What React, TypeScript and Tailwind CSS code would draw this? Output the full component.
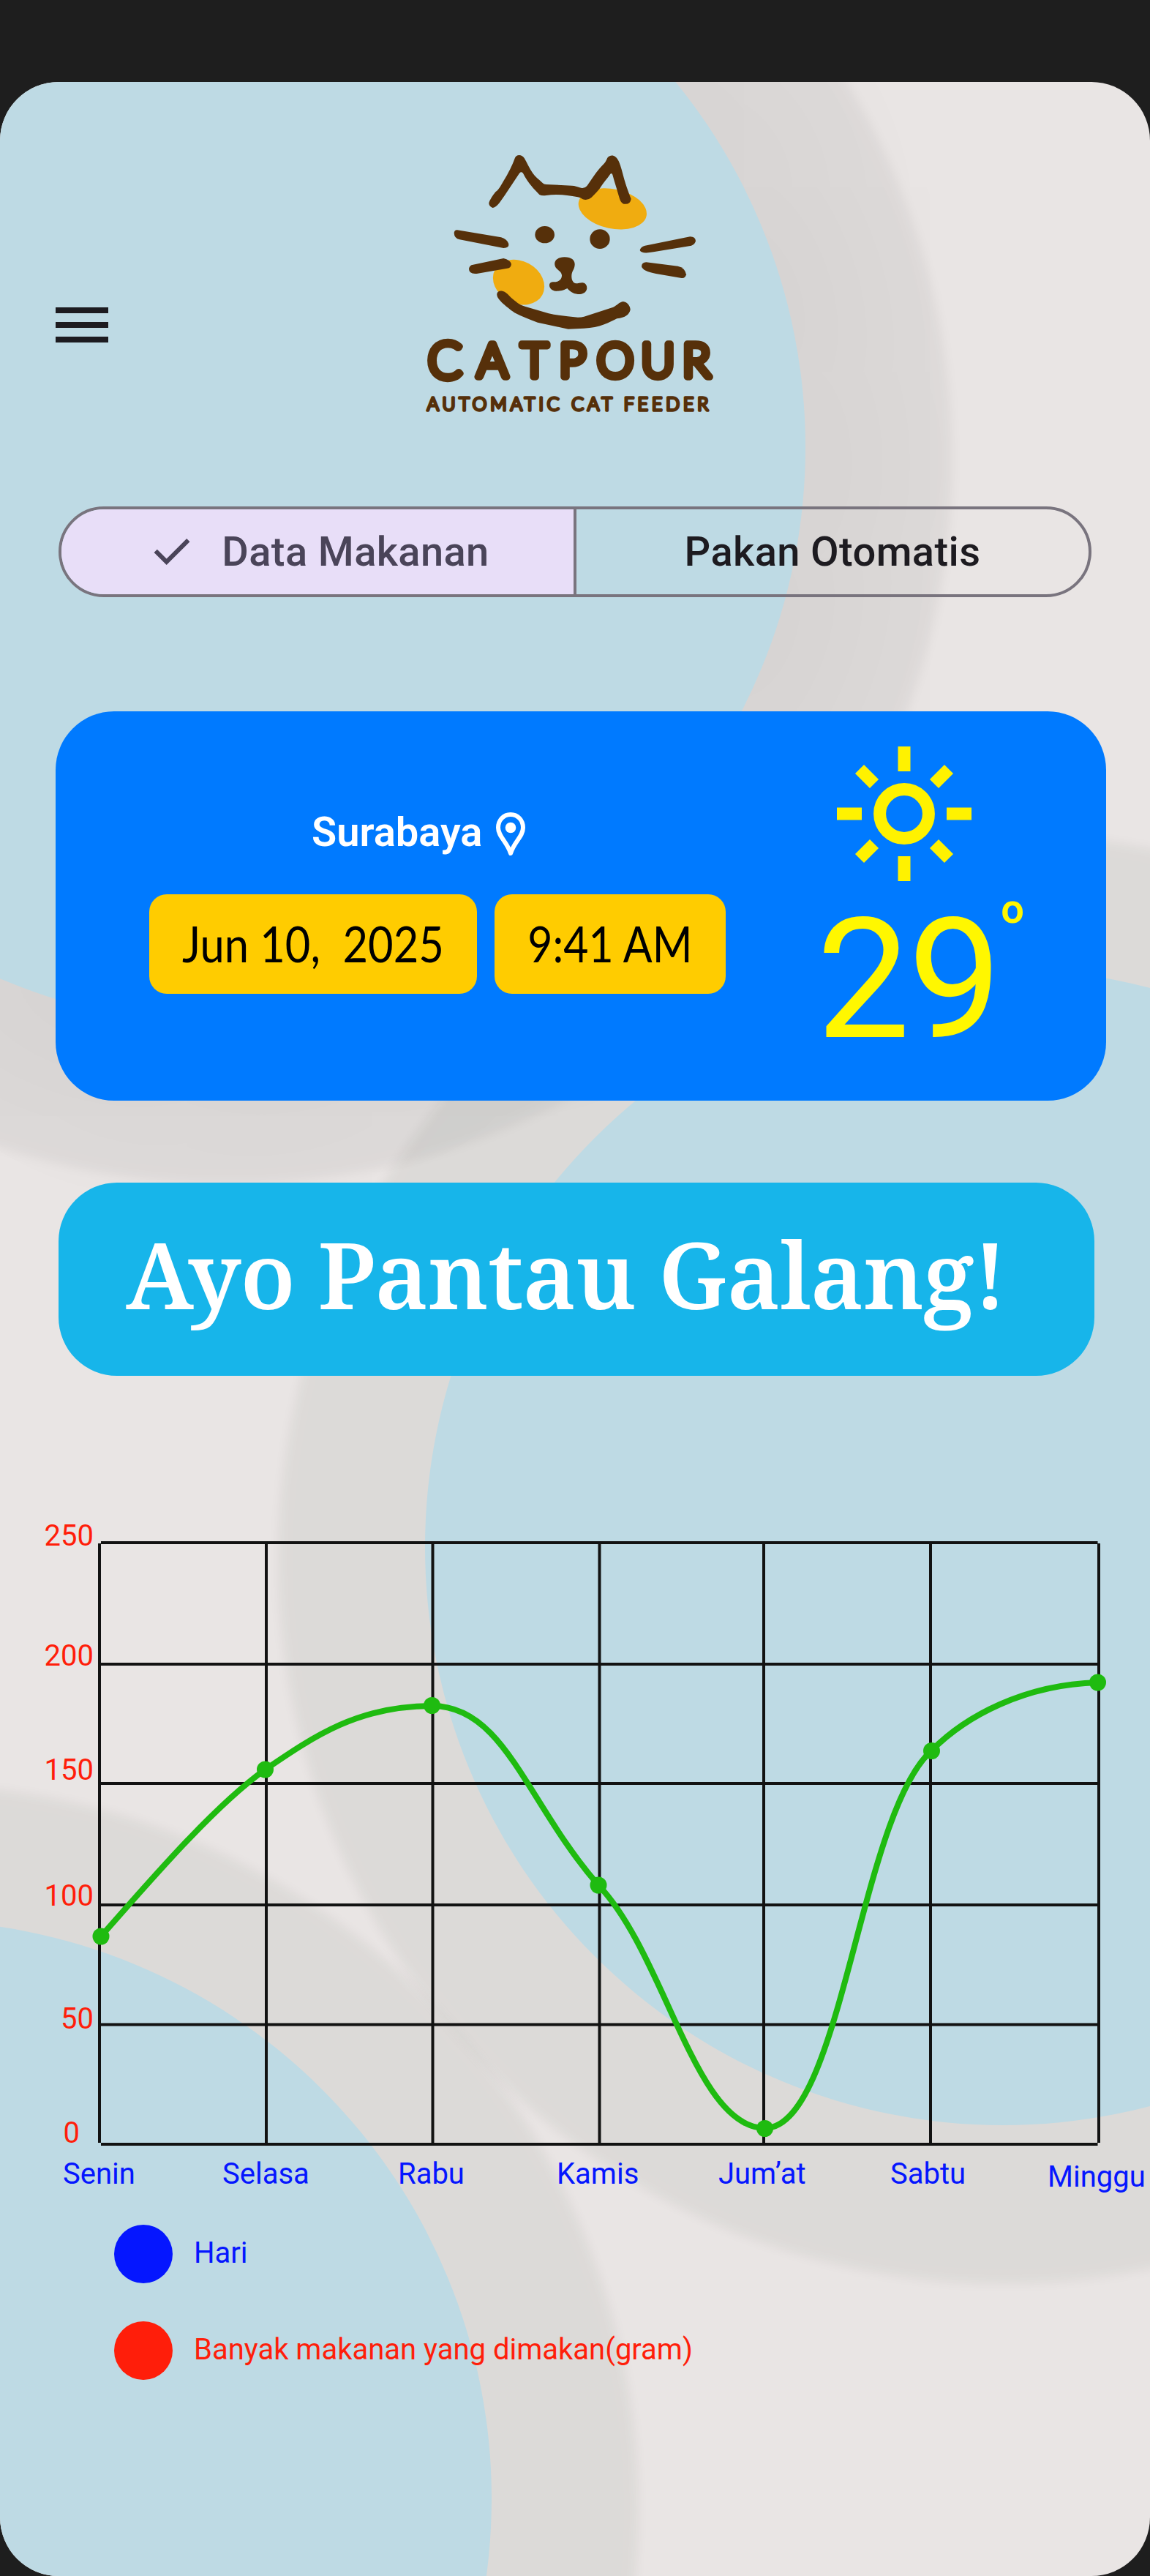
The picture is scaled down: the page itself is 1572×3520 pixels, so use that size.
const BROWN = "#56300a";

function CatLogo() {
  return (
    <svg viewBox="0 0 1320 1170" className="mt-[78px] ml-[412px] h-[390px] w-[440px] shrink-0 overflow-visible">
      <ellipse cx="832" cy="286" rx="142" ry="81" fill="#f0ac10" transform="rotate(12 832 286)" />
      <ellipse cx="447" cy="587" rx="110" ry="87" fill="#f0ac10" transform="rotate(28 447 587)" />
      <g fill={BROWN}>
        <path d="M325 262Q324 275 340 282Q352 282 368 262C390 232 420 185 450 140Q458 132 465 140C480 170 500 196 532 228Q542 234 560 231C600 225 640 229 690 238Q700 240 710 247Q728 254 745 240C760 225 770 215 778 205C790 185 808 165 822 145Q828 136 832 146C840 175 848 200 858 235C862 250 866 262 878 266Q905 270 908 245C900 225 890 200 880 165C872 135 866 110 858 92C845 65 825 62 812 76C808 82 806 92 796 102C775 122 752 155 733 184Q722 203 706 201C690 198 685 192 665 191L560 186Q550 186 545 180C530 165 515 155 505 140C490 118 480 95 470 78C458 60 435 62 430 82C422 105 405 140 385 172C372 195 365 208 352 217C342 230 328 250 325 262Z" />
        <path d="M195 373L375 403Q400 410 406 430Q408 447 385 447L205 412Q183 408 182 385Q184 372 195 373Z" />
        <path d="M260 515L385 489Q412 495 417 512Q416 528 400 530L275 552Q243 555 243 532Q245 517 260 515Z" />
        <path d="M965 437L1150 400Q1172 400 1173 418Q1170 432 1155 437L1000 463Q950 472 944 456Q946 442 965 437Z" />
        <path d="M970 505L1100 521Q1130 528 1134 556Q1130 572 1115 570L1010 552Q955 542 951 522Q952 506 970 505Z" />
        <ellipse cx="554" cy="392" rx="40" ry="35" />
        <ellipse cx="780" cy="410" rx="41" ry="40" />
        <path d="M635 484C665 484 678 498 677 515C676 535 665 540 664 560C663 580 672 590 682 592C692 592 700 588 710 589Q727 592 727 612C725 632 705 637 690 636C668 634 655 622 646 612C635 618 622 624 600 623C582 622 573 610 573 600C573 588 582 585 595 586C610 585 622 578 624 562C625 545 610 540 600 528C588 510 595 484 635 484Z" />
        <path d="M358 640C356 625 370 621 380 623C395 625 405 640 425 658C440 670 450 680 475 687L570 715C610 724 650 727 690 731Q705 731 715 728L835 689C850 682 860 668 875 666C893 667 905 685 905 700C900 720 885 732 850 736C820 750 780 775 715 776L650 779L525 752C490 740 460 727 430 712C400 690 360 660 358 640Z" />
      </g>
      <g fill={BROWN} stroke={BROWN} strokeLinejoin="round" strokeLinecap="round" textAnchor="middle" className="font-['Lato']">
        <text y="974" fontSize="190" fontWeight="300" strokeWidth="28">
          <tspan x="144" y="981" fontSize="206">C</tspan>
          <tspan x="339 512 668 843 1018 1176" y="974">ATPOUR</tspan>
        </text>
        <text x="648" y="1113" fontSize="74" fontWeight="300" strokeWidth="11" textLength="1154">
          AUTOMATIC CAT FEEDER
        </text>
      </g>
    </svg>
  );
}

function MenuButton() {
  return (
    <button aria-label="Menu" className="mt-[308px] ml-[76px] flex w-[72px] shrink-0 flex-col gap-3">
      <span className="h-2 w-full bg-[#1d1b20]" />
      <span className="h-2 w-full bg-[#1d1b20]" />
      <span className="h-2 w-full bg-[#1d1b20]" />
    </button>
  );
}

function Tabs() {
  return (
    <div className="ml-20 flex h-[124px] w-[1412px] overflow-hidden rounded-full border-4 border-[#79747e] text-[56px] font-medium tracking-[0.4px]">
      <button className="flex w-[704px] items-center justify-center gap-8 border-r-4 border-[#79747e] bg-[#e8def8] text-[#4a4459]">
        <svg viewBox="0 0 24 24" className="size-[72px]" fill="currentColor">
          <path d="M9.55 18L3.85 12.3L5.275 10.875L9.55 15.15L18.725 5.975L20.15 7.4L9.55 18Z" />
        </svg>
        Data Makanan
      </button>
      <button className="flex flex-1 items-center justify-center text-[#1d1b20]">Pakan Otomatis</button>
    </div>
  );
}

function SunIcon() {
  return (
    <svg viewBox="-92 -92 184 184" className="size-[184px]" fill="none" stroke="#fff200" strokeWidth="17">
      <circle r="33.4" />
      <path d="M0-92V-58M0 58V92M-92 0H-58M58 0H92M-61-61L-41-41M61-61L41-41M-61 61L-41 41M61 61L41 41" />
    </svg>
  );
}

function WeatherCard() {
  return (
    <section className="mt-[156px] ml-[76px] flex h-[532px] w-[1436px] rounded-[80px] bg-[#007aff]">
      <div className="ml-32 w-[788px] pt-[134px]">
        <div className="flex h-[68px] items-center pl-[222px] text-[56px] font-semibold text-white">
          <span className="-mt-1.5 w-[252px] whitespace-nowrap">Surabaya</span>
          <svg viewBox="0 0 40 60" className="h-[60px] w-10">
            <path
              d="M20 3C10 3 3 11 3 21C3 33 15 40 20 56C25 40 37 33 37 21C37 11 30 3 20 3Z"
              fill="none"
              stroke="#fff"
              strokeWidth="6"
              strokeLinejoin="round"
            />
            <circle cx="20" cy="21" r="7.3" fill="#fff" />
          </svg>
        </div>
        <div className="mt-12 flex gap-6 font-['Lato'] text-[67px] text-black">
          <div className="flex h-[136px] w-[448px] items-center justify-center rounded-3xl bg-[#ffcc00]">
            <span className="-mt-0.5 scale-x-[0.89] whitespace-pre">Jun 10,  2025</span>
          </div>
          <div className="flex h-[136px] w-[316px] items-center justify-center rounded-3xl bg-[#ffcc00]">
            <span className="-mt-0.5 scale-x-[0.88] whitespace-pre">9:41 AM</span>
          </div>
        </div>
      </div>
      <div className="ml-[120px] pt-12">
        <div className="pl-[32px]">
          <SunIcon />
        </div>
        <div className="mt-[3px] ml-1 flex text-[#fff700]">
          <span className="text-[228px] leading-[264px] tracking-[-3px]">29</span>
          <span className="ml-0.5 mt-[1px] text-[56px] leading-[68px] font-semibold">o</span>
        </div>
      </div>
    </section>
  );
}

const columns = [136, 364, 591.5, 819.5, 1044, 1272, 1502];
const rows = [2108, 2274, 2437, 2603, 2766.5, 2930];
const points = [
  [138, 2646],
  [362.5, 2418],
  [590.5, 2330.5],
  [818, 2576],
  [1045.5, 2908.5],
  [1273.5, 2392.5],
  [1500.5, 2299],
];
const amounts: [string, number, number][] = [
  ["250", 128, 2112],
  ["200", 128, 2276],
  ["150", 128, 2432],
  ["100", 128, 2604],
  ["50", 128, 2772],
  ["0", 109, 2928],
];
const days: [string, number, number][] = [
  ["Senin", 86, 2984],
  ["Selasa", 304, 2984],
  ["Rabu", 544, 2984],
  ["Kamis", 761, 2984],
  ["Jum’at", 982, 2984],
  ["Sabtu", 1217, 2984],
  ["Minggu", 1432, 2988],
];

function FoodChart() {
  return (
    <svg viewBox="0 2060 1572 960" className="mt-[180px] h-[960px] w-[1572px]" fontSize="40">
      <g stroke="#121212" strokeWidth="4">
        {columns.map((x) => (
          <line key={x} x1={x} x2={x} y1="2109" y2="2928" />
        ))}
        {rows.map((y) => (
          <line key={y} x1="138" x2="1500.5" y1={y} y2={y} />
        ))}
      </g>
      <path
        d="M138 2646C200 2576 290 2470 362.500 2418C430 2372 490 2331 590.500 2331C690 2331 720 2464 818 2576C910 2672 950 2908 1045.500 2908C1150 2908 1175 2480 1273.500 2392C1320 2345 1400 2302 1500.500 2299"
        fill="none"
        stroke="#1fbb10"
        strokeWidth="8"
      />
      {points.map(([x, y]) => (
        <circle key={x} cx={x} cy={y} r="11.500" fill="#1fbb10" />
      ))}
      <g fill="#ff1e0a" textAnchor="end">
        {amounts.map(([label, x, y]) => (
          <text key={label} x={x} y={y}>
            {label}
          </text>
        ))}
      </g>
      <g fill="#0516ff">
        {days.map(([label, x, y]) => (
          <text key={label} x={x} y={y}>
            {label}
          </text>
        ))}
      </g>
    </svg>
  );
}

function Legend() {
  return (
    <ul className="mt-5 ml-[156px] flex flex-col gap-[52px] text-[40px]">
      <li className="flex items-center gap-[29px] text-[#0516ff]">
        <span className="size-20 rounded-full bg-[#0516ff]" />
        <span className="-mt-0.5">Hari</span>
      </li>
      <li className="flex items-center gap-[29px] text-[#ff1e0a]">
        <span className="size-20 rounded-full bg-[#ff1e0a]" />
        <span className="-mt-0.5">Banyak makanan yang dimakan(gram)</span>
      </li>
    </ul>
  );
}

export default function App() {
  return (
    <div className="h-[3520px] w-[1572px] overflow-hidden bg-[#1e1e1e] pt-[112px] font-['Roboto',sans-serif]">
      <main className="relative isolate h-[3408px] overflow-hidden rounded-[80px] bg-[#e9e5e4]">
        <div className="absolute -top-[291px] -left-[479px] -z-10 size-[1580px] rounded-full bg-[#bedae4] shadow-[0_16px_16px_200px_rgba(0,10,10,0.05),0_16px_240px_100px_rgba(0,0,0,0.035)]" />
        <div className="absolute top-[1212px] left-[581px] -z-10 size-[1580px] rounded-full bg-[#bedae4] shadow-[0_16px_16px_200px_rgba(0,30,20,0.055)]" />
        <div className="absolute top-[2512px] -left-[908px] -z-10 size-[1580px] rounded-full bg-[#bedae4] shadow-[0_16px_16px_200px_rgba(0,30,20,0.055)]" />
        <header className="flex h-[580px] items-start">
          <MenuButton />
          <CatLogo />
        </header>
        <Tabs />
        <WeatherCard />
        <h1 className="mt-[112px] ml-20 flex h-[264px] w-[1416px] items-center rounded-[80px] bg-[#17b5ea] pb-4 pl-[92px] font-['Noto_Serif','Liberation_Serif',serif] text-[126px] leading-none font-semibold tracking-[-1.1px] whitespace-nowrap text-white">
          Ayo Pantau Galang!
        </h1>
        <FoodChart />
        <Legend />
      </main>
    </div>
  );
}
